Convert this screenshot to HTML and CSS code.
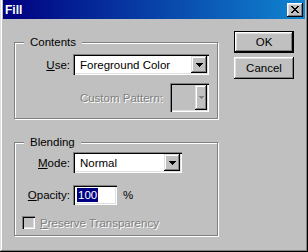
FILE: index.html
```html
<!DOCTYPE html>
<html lang="en">
<head>
    <meta charset="UTF-8">
    <title>Fill</title>
    <link rel="stylesheet" href="styles.css">
</head>
<body>
    <div class="window">
        <div class="titlebar">
            <span class="title">Fill</span>
            <span class="close">
                <svg width="8" height="7" viewBox="0 0 8 7" shape-rendering="crispEdges"><path d="M0 0h2v1h-2zM6 0h2v1h-2zM1 1h2v1h-2zM5 1h2v1h-2zM2 2h4v1h-4zM3 3h2v1h-2zM2 4h4v1h-4zM1 5h2v1h-2zM5 5h2v1h-2zM0 6h2v1h-2zM6 6h2v1h-2z" fill="#000"/></svg>
            </span>
        </div>

        <div class="client">
            <div class="groups">
                <fieldset class="group contents">
                    <legend>Contents</legend>
                    <div class="field use-row">
                        <label class="label"><u>U</u>se:</label>
                        <div class="combo use-combo">
                            <span class="value">Foreground Color</span>
                            <span class="drop">
                                <svg width="7" height="4" viewBox="0 0 7 4" shape-rendering="crispEdges"><path d="M0 0h7v1h-1v1h-1v1h-1v1h-1v-1h-1v-1h-1v-1h-1z" fill="#000"/></svg>
                            </span>
                        </div>
                    </div>
                    <div class="pattern-row">
                        <span class="disabled">Custom Pattern:</span>
                        <div class="pattern">
                            <span class="drop small">
                                <svg width="5" height="3" viewBox="0 0 5 3" shape-rendering="crispEdges"><path d="M0 0h5v1h-1v1h-1v1h-1v-1h-1v-1h-1z" fill="#808080"/></svg>
                            </span>
                        </div>
                    </div>
                </fieldset>

                <fieldset class="group blending">
                    <legend>Blending</legend>
                    <div class="field mode-row">
                        <label class="label"><u>M</u>ode:</label>
                        <div class="combo mode-combo">
                            <span class="value">Normal</span>
                            <span class="drop">
                                <svg width="7" height="4" viewBox="0 0 7 4" shape-rendering="crispEdges"><path d="M0 0h7v1h-1v1h-1v1h-1v1h-1v-1h-1v-1h-1v-1h-1z" fill="#000"/></svg>
                            </span>
                        </div>
                    </div>
                    <div class="field opacity-row">
                        <label class="label"><u>O</u>pacity:</label>
                        <div class="textbox"><span class="sel">100</span></div>
                        <span class="unit">%</span>
                    </div>
                    <div class="check-row">
                        <span class="checkbox"></span>
                        <span class="disabled"><u>P</u>reserve Transparency</span>
                    </div>
                </fieldset>
            </div>

            <div class="buttons">
                <div class="btn default">OK</div>
                <div class="btn">Cancel</div>
            </div>
        </div>
    </div>
</body>
</html>
```

FILE: styles.css
```css
body {
    margin: 0;
    background-color: #c0c0c0;
    font-family: "Liberation Sans", Arial, sans-serif;
    font-size: 11.5px;
    color: #000;
    overflow: hidden;
}

.window {
    width: 308px;
    height: 255px;
    margin-top: -3px;
    padding: 3px;
    box-sizing: border-box;
    background-color: #c0c0c0;
    box-shadow: inset -1px -1px #000, inset 1px 1px #dfdfdf, inset -2px -2px #808080, inset 2px 2px #fff;
    display: flex;
    flex-direction: column;
}

.titlebar {
    flex: none;
    height: 19px;
    padding: 0 2px;
    display: flex;
    align-items: center;
    justify-content: space-between;
    background: linear-gradient(to right, #000080, #1084d0);
    color: #fff;
    font-weight: bold;
    font-size: 12px;
}

.close {
    width: 16px;
    height: 14px;
    display: flex;
    align-items: center;
    justify-content: center;
    background-color: #c0c0c0;
    box-shadow: inset -1px -1px #000, inset 1px 1px #fff, inset -2px -2px #808080, inset 2px 2px #dfdfdf;
}

.close svg {
    display: block;
    margin-left: -1px;
}

.client {
    display: flex;
    padding-left: 11px;
}

.groups {
    width: 204px;
}

.group {
    margin: 16px 0 0;
    padding: 0 0 6px;
    min-inline-size: 0;
    border: 1px solid #808080;
    box-shadow: inset 1px 1px #fff, 1px 1px #fff;
}

.group legend {
    margin-left: 9px;
    padding: 0 6px;
    line-height: 14px;
    background-color: #c0c0c0;
}

.field {
    display: flex;
    align-items: center;
}

.label {
    width: 55px;
    margin-right: 3px;
    text-align: right;
    flex: none;
}

.use-row {
    margin-top: 5px;
}

.combo {
    height: 21px;
    box-sizing: border-box;
    padding: 2px;
    display: flex;
    align-items: center;
    background-color: #fff;
    box-shadow: inset 1px 1px #808080, inset 2px 2px #000, inset -1px -1px #fff, inset -2px -2px #dfdfdf;
}

.use-combo {
    width: 136px;
}

.mode-combo {
    width: 109px;
}

.combo .value {
    padding-left: 5px;
}

.drop {
    margin-left: auto;
    width: 16px;
    height: 17px;
    display: flex;
    align-items: center;
    justify-content: center;
    background-color: #c0c0c0;
    box-shadow: inset -1px -1px #000, inset 1px 1px #dfdfdf, inset -2px -2px #808080, inset 2px 2px #fff;
}

.drop svg {
    display: block;
}

.pattern-row {
    margin-top: 8px;
    padding-right: 8px;
    display: flex;
    align-items: center;
    justify-content: flex-end;
    gap: 7px;
}

.pattern {
    width: 39px;
    height: 29px;
    box-sizing: border-box;
    padding: 2px;
    display: flex;
    background-color: #c0c0c0;
    box-shadow: inset 1px 1px #808080, inset 2px 2px #000, inset -1px -1px #fff, inset -2px -2px #dfdfdf;
}

.drop.small {
    width: 12px;
    height: 25px;
}

.disabled {
    color: #808080;
    text-shadow: 1px 1px 0 #fff;
}

.mode-row {
    margin-top: 3px;
}

.opacity-row {
    margin-top: 12px;
}

.textbox {
    width: 44px;
    height: 20px;
    box-sizing: border-box;
    padding: 2px;
    display: flex;
    align-items: center;
    background-color: #fff;
    box-shadow: inset 1px 1px #808080, inset 2px 2px #000, inset -1px -1px #fff, inset -2px -2px #dfdfdf;
}

.sel {
    margin-left: 2px;
    padding: 0 1px;
    line-height: 14px;
    background-color: #000080;
    color: #fff;
}

.unit {
    margin-left: 6px;
}

.check-row {
    margin-top: 11px;
    padding-left: 7px;
    display: flex;
    align-items: center;
    gap: 5px;
}

.checkbox {
    width: 13px;
    height: 13px;
    background-color: #c0c0c0;
    box-shadow: inset 1px 1px #808080, inset 2px 2px #000, inset -1px -1px #fff, inset -2px -2px #dfdfdf;
}

.buttons {
    margin-left: 16px;
    width: 60px;
    padding-top: 12px;
    display: flex;
    flex-direction: column;
    gap: 4px;
}

.btn {
    height: 22px;
    display: flex;
    align-items: center;
    justify-content: center;
    background-color: #c0c0c0;
    box-shadow: inset -1px -1px #000, inset 1px 1px #fff, inset -2px -2px #808080, inset 2px 2px #dfdfdf;
}

.btn.default {
    box-shadow: inset 0 0 0 1px #000, inset -2px -2px #000, inset 2px 2px #fff, inset -3px -3px #808080, inset 3px 3px #dfdfdf;
}
```
